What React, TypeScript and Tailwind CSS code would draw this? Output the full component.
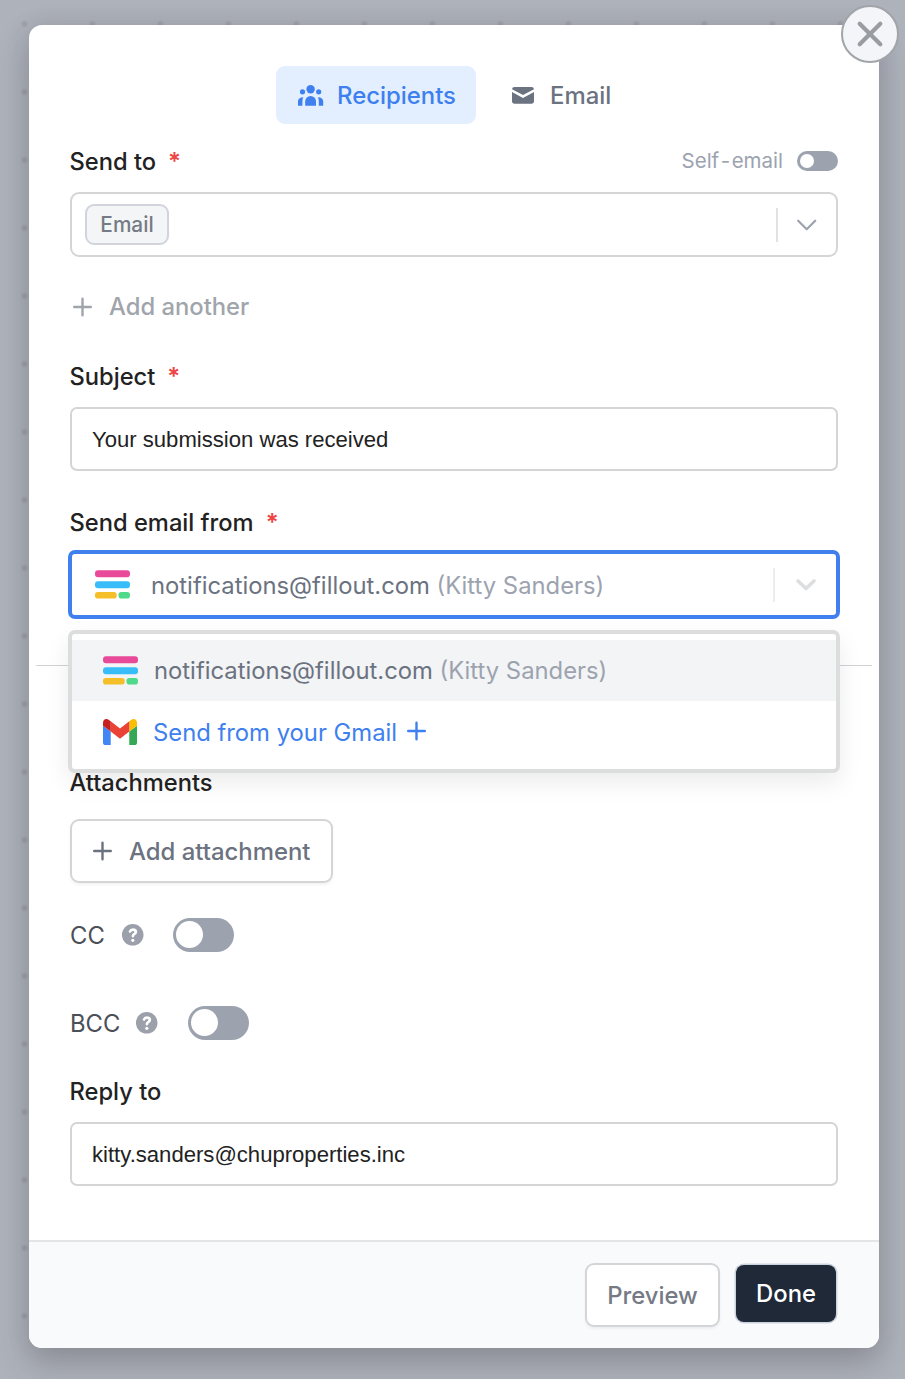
import React from "react";

function PeopleIcon() {
  return (
    <svg width="26" height="22" viewBox="0 0 26 22" fill="currentColor" className="mt-[2px]">
      <circle cx="12.6" cy="4.2" r="4.2" />
      <circle cx="4.5" cy="6.8" r="2.6" />
      <circle cx="20.7" cy="6.8" r="2.6" />
      <path d="M7.200 20.700v-4.400a5.400 5.200 0 0 1 10.800 0v4.400z" />
      <path d="M0 20.700v-4.400c0-2.200 1.800-4 5.300-4a9 9 0 0 0-.9 4v4.400z" />
      <path d="M25.200 20.700v-4.400c0-2.200-1.800-4-5.300-4a9 9 0 0 1 .9 4v4.400z" />
    </svg>
  );
}

function MailIcon() {
  return (
    <svg width="22" height="17" viewBox="0 0 22 17" fill="currentColor">
      <path d="M2.500 0h17A2.500 2.500 0 0 1 22 2.300L11 8 0 2.300A2.500 2.500 0 0 1 2.500 0z" />
      <path d="M0 5l11 5.900L22 5v9a2.700 2.700 0 0 1-2.700 2.700H2.700A2.700 2.700 0 0 1 0 14z" />
    </svg>
  );
}

function Plus() {
  return (
    <svg width="21" height="20" viewBox="0 0 21 20" fill="none" stroke="currentColor" strokeWidth="2.4" strokeLinecap="round" className="shrink-0">
      <path d="M10.500 1.700v16.600M2.200 10h16.600" />
    </svg>
  );
}

function FilloutIcon() {
  return (
    <svg width="35" height="29" viewBox="0 0 35 29" className="shrink-0">
      <rect x="0" y="0.3" width="35" height="7" rx="3" fill="#e84a99" />
      <rect x="0" y="11.2" width="35" height="7" rx="3" fill="#38bdf8" />
      <rect x="0" y="22" width="21.7" height="6.5" rx="2.8" fill="#f5bf2a" />
      <rect x="23.5" y="22" width="11.5" height="6.5" rx="2.8" fill="#4fd98a" />
    </svg>
  );
}

function GmailIcon() {
  return (
    <svg width="34" height="26" viewBox="52 42 88 66" preserveAspectRatio="none" className="shrink-0">
      <path fill="#4285f4" d="M58 108h14V74L52 59v43c0 3.320 2.690 6 6 6" />
      <path fill="#34a853" d="M120 108h14c3.320 0 6-2.690 6-6V59l-20 15" />
      <path fill="#fbbc04" d="M120 48v26l20-15v-8c0-7.420-8.470-11.650-14.400-7.200" />
      <path fill="#ea4335" d="M72 74V48l24 18 24-18v26L96 92" />
      <path fill="#c5221f" d="M52 51v8l20 15V48l-5.600-4.200c-5.940-4.450-14.400-.220-14.400 7.200" />
    </svg>
  );
}

function HelpIcon() {
  return (
    <svg width="22" height="22" viewBox="0 0 22 22" className="shrink-0">
      <circle cx="10.700" cy="10.800" r="10.800" fill="#9ca0ab" />
      <path d="M8 7.400c.5-1.200 1.500-1.800 2.900-1.800 1.700 0 2.900.9 2.900 2.300 0 2-2.900 2.200-2.900 4.200" fill="none" stroke="#fff" strokeWidth="2.7" strokeLinecap="round" />
      <circle cx="10.800" cy="16.300" r="1.600" fill="#fff" />
    </svg>
  );
}

function Toggle() {
  return (
    <button className="flex h-[34px] w-[61px] items-center rounded-full bg-[#9ca3af] pl-[3px]">
      <span className="mb-px size-[27px] rounded-full bg-white" />
    </button>
  );
}

function Label({ children, required = false }: { children: string; required?: boolean }) {
  return (
    <div className="-ml-[0.5px] flex h-[34px] items-center pt-[2px] text-[23.7px] font-medium text-[#222]">
      <span className="whitespace-nowrap">{children}</span>
      {required && <span className="ml-3 text-[24px] font-semibold text-[#ef4444]">*</span>}
    </div>
  );
}

function Address() {
  return (
    <span className="whitespace-nowrap text-[23.8px] text-[#6b7280]">
      notifications@fillout.com <span className="text-[#9ca3af]">(Kitty Sanders)</span>
    </span>
  );
}

export default function App() {
  return (
    <div className="relative h-[1379px] w-[905px] overflow-hidden bg-[#adb2bb] bg-[radial-gradient(circle_at_24.5px_24px,#9fa2a9_1.5px,transparent_4px)] bg-[size:68px_68px] px-[29px] pt-[25px] font-[Inter,'Liberation_Sans',sans-serif]">
      <main className="flex h-[1323px] w-[850px] flex-col rounded-[13px] bg-white shadow-[0_16px_32px_rgba(60,50,60,0.25),0_0_24px_rgba(60,50,60,0.1)]">
        <div className="flex h-[1215px] flex-col px-[41px] pt-[41px]">
          <nav className="ml-[206px] flex h-[58px] gap-[14px] text-[23.9px] font-medium">
            <button className="flex w-[200px] items-center rounded-[9px] bg-[#e3effe] pl-[22px] text-[#3e80ef]">
              <PeopleIcon />
              <span className="ml-[13px] pt-[2px]">Recipients</span>
            </button>
            <button className="flex items-center pl-[22px] text-[#6b7280]">
              <MailIcon />
              <span className="ml-[16px] pt-[2px]">Email</span>
            </button>
          </nav>

          <div className="mt-5 flex items-center justify-between">
            <Label required>Send to</Label>
            <div className="flex items-center gap-[14px] text-[20.5px] text-[#9ca3af]">
              <span className="pt-px">Self<span className="mx-[1.5px]">-</span>email</span>
              <button className="flex h-5 w-[41px] items-center rounded-full bg-[#9ca3af] pl-[3px]">
                <span className="size-[14px] rounded-full bg-white" />
              </button>
            </div>
          </div>
          <div className="mt-[14px] flex h-[65px] shrink-0 items-center rounded-[9px] border-2 border-[#d3d5d7] pl-[13px]">
            <span className="flex h-[41px] w-[84px] items-center justify-center rounded-[9px] border-2 border-[#d1d5db] bg-[#f3f5f7] text-[20.8px] font-medium text-[#757b85]">Email</span>
            <span className="ml-auto h-[34px] w-[2px] bg-[#e0e2e5]" />
            <svg width="20" height="12" viewBox="0 0 20 12" className="mx-[19px]" fill="none" stroke="#9ca3af" strokeWidth="2.2" strokeLinecap="round" strokeLinejoin="round"><path d="M1.200 1.700L9.700 10.200l8.500-8.500" /></svg>
          </div>

          <button className="mt-[33px] flex h-[34px] items-center gap-4 pl-[2px] text-[23.8px] font-medium text-[#a0a5ac]">
            <Plus /><span>Add another</span>
          </button>

          <div className="mt-[35px]"><Label required>Subject</Label></div>
          <div className="mt-[14px] flex h-16 shrink-0 items-center rounded-[7px] border-2 border-[#d3d5d7] pl-5 pt-[2px] font-['Liberation_Sans',sans-serif] text-[22.1px] text-[#222]">
            Your submission was received
          </div>

          <div className="mt-[34px]"><Label required>Send email from</Label></div>
          <div className="relative -mx-[2px] mt-[11px] flex h-[69px] shrink-0 items-center rounded-[7px] border-4 border-[#4080ee] pl-[23px]">
            <FilloutIcon />
            <span className="ml-[21px] flex pt-[2px]"><Address /></span>
            <span className="ml-auto h-[34px] w-[2px] bg-[#eceded]" />
            <svg width="22" height="14" viewBox="0 0 22 14" className="ml-[20px] mr-[19px]" fill="none" stroke="#dcdee0" strokeWidth="3.6" strokeLinecap="round" strokeLinejoin="round"><path d="M3 3l8 7.500L19 3" /></svg>
            <div className="absolute -left-1 top-[76px] z-10 flex h-[143px] w-[772px] flex-col rounded-[7px] border-4 border-[#dcdddd] bg-white pt-[6px] shadow-[0_10px_24px_rgba(0,0,0,0.08)]">
              <div className="flex h-[61px] items-center bg-[#f3f4f6] pl-[31px]">
                <FilloutIcon />
                <span className="ml-[16px] flex pt-px"><Address /></span>
              </div>
              <div className="flex h-[62px] items-center pl-[31px] text-[23.8px] text-[#3e80ef]">
                <GmailIcon />
                <span className="ml-4 mr-[9px] pt-[2px]">Send from your Gmail</span>
                <span className="-mt-[2px]"><Plus /></span>
              </div>
            </div>
          </div>

          <div className="-mx-[34px] mt-[46px] h-px shrink-0 bg-[#d1d3d5]" />
          <div className="mt-[99px]"><Label>Attachments</Label></div>
          <button className="mt-5 flex h-16 w-[263px] shrink-0 items-center gap-4 rounded-[9px] border-2 border-[#d3d5d7] pl-5 text-[23.9px] font-medium text-[#6b7280] shadow-[0_2px_3px_rgba(0,0,0,0.05)]">
            <Plus /><span className="pt-[2px]">Add attachment</span>
          </button>

          <div className="mt-[35px] flex h-[34px] items-center text-[23.8px] text-[#4b4f56]">
            <span className="w-[52px] pt-[2px]">CC</span><HelpIcon /><span className="w-[29px]" /><Toggle />
          </div>
          <div className="mt-[54px] flex h-[34px] items-center text-[23.8px] text-[#4b4f56]">
            <span className="w-[66px] pt-[2px]">BCC</span><HelpIcon /><span className="w-[30px]" /><Toggle />
          </div>

          <div className="mt-[34px]"><Label>Reply to</Label></div>
          <div className="mt-[14px] flex h-16 shrink-0 items-center rounded-[7px] border-2 border-[#d3d5d7] pl-5 pt-[2px] font-['Liberation_Sans',sans-serif] text-[22.1px] text-[#222]">
            kitty.sanders@chuproperties.inc
          </div>
        </div>
        <footer className="flex h-[108px] items-start justify-end gap-4 rounded-b-[13px] border-t-2 border-[#e2e5e8] bg-[#f9fafc] pr-[43px] pt-[21px] text-[23.8px] font-medium">
          <button className="h-16 w-[135px] rounded-[9px] border-2 border-[#d3d5d7] bg-white pt-[2px] text-[#757a84] shadow-[0_2px_3px_rgba(0,0,0,0.05)]">Preview</button>
          <button className="mt-[2px] h-[57px] w-[100px] rounded-[8px] bg-[#1f2937] text-white shadow-[0_0_0_1.5px_#cbd3df]">Done</button>
        </footer>
      </main>
      <button className="absolute left-[841px] top-[5px] flex size-[58px] items-center justify-center rounded-full border-2 border-[#a1a4a8] bg-[#f3f5f8]">
        <svg width="28" height="28" viewBox="0 0 28 28" fill="none" stroke="#999da2" strokeWidth="4.2" strokeLinecap="round"><path d="M3.700 3.700l20.600 20.600M24.300 3.700L3.700 24.300" /></svg>
      </button>
    </div>
  );
}
